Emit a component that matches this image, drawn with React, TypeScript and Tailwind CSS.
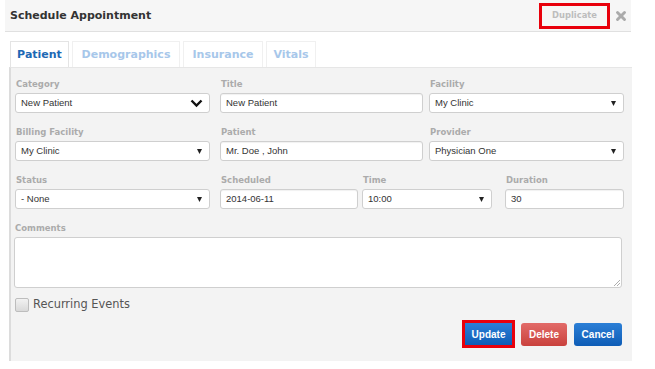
import React from 'react';
import { X } from 'lucide-react';

const sans = { fontFamily: '"DejaVu Sans", Verdana, sans-serif' };

function Label({ children }: { children: React.ReactNode }) {
  return <div className="h-[12px] mb-[3px] text-[8.5px] leading-[12px] font-bold text-[#ababab] pl-[1px]" style={sans}>{children}</div>;
}

function Input({ value }: { value: string }) {
  return (
    <div className="h-[20px] bg-white border border-[#cfcfcf] rounded-[3px] shadow-[inset_0_1px_1px_rgba(0,0,0,0.06)] flex items-center px-[5px] text-[9.5px] text-[#333] font-['Liberation_Sans',Arial,sans-serif]">
      {value}
    </div>
  );
}

function Select({ value, chevron }: { value: string; chevron?: boolean }) {
  return (
    <div className="h-[20px] bg-white border border-[#cfcfcf] rounded-[3px] flex items-center justify-between pl-[5px] pr-[7px] text-[9.5px] text-[#333] font-['Liberation_Sans',Arial,sans-serif]">
      <span>{value}</span>
      {chevron ? (
        <svg width="13" height="9" viewBox="0 0 13 9" className="mr-[-1px]">
          <path d="M1.5 1.5 L6.5 6.5 L11.5 1.5" fill="none" stroke="#111" strokeWidth="2.4" />
        </svg>
      ) : (
        <svg width="5" height="5" viewBox="0 0 6 6">
          <path d="M0 0 L6 0 L3 6 Z" fill="#222" />
        </svg>
      )}
    </div>
  );
}

function Field({ label, w, ml, children }: { label: string; w: string; ml: string; children: React.ReactNode }) {
  return (
    <div className={`${w} ${ml} shrink-0`}>
      <Label>{label}</Label>
      {children}
    </div>
  );
}

export default function App() {
  return (
    <div className="w-[655px] h-[369px] bg-white overflow-hidden relative">
      {/* Header */}
      <div className="ml-[5px] w-[626px] h-[32px] bg-[#f6f6f6] border-b border-[#e0e0e0] flex items-center justify-between pl-[5px]">
        <div className="text-[11px] font-bold text-[#333] mt-[2px]" style={sans}>Schedule Appointment</div>
        <div className="flex items-center">
          <div className="w-[71px] h-[26px] border-[3px] border-[#e8000b] flex items-center justify-center text-[8.4px] font-bold text-[#bdbdbd]" style={sans}>
            Duplicate
          </div>
          <X className="w-[14px] h-[14px] text-[#ababab] ml-[4px] mr-[3px]" strokeWidth={5} />
        </div>
      </div>

      {/* Tabs */}
      <div className="ml-[10px] mt-[9px] flex gap-[3px] h-[26px]" style={sans}>
        <div className="w-[59px] bg-white border border-[#e4e4e4] border-b-0 flex items-center justify-center pt-[1px] text-[11px] font-bold text-[#1d68b4]">Patient</div>
        <div className="w-[108px] bg-white border border-[#f0f0f0] border-b-0 flex items-center justify-center pt-[1px] text-[11px] font-bold text-[#a7c7ea]">Demographics</div>
        <div className="w-[80px] bg-white border border-[#f0f0f0] border-b-0 flex items-center justify-center pt-[1px] text-[11px] font-bold text-[#a7c7ea]">Insurance</div>
        <div className="w-[50px] bg-white border border-[#f0f0f0] border-b-0 flex items-center justify-center pt-[1px] text-[11px] font-bold text-[#a7c7ea]">Vitals</div>
      </div>

      {/* Panel */}
      <div className="ml-[9px] w-[623px] h-[294px] bg-[#f3f3f3] border-l-[2px] border-l-[#dcdcdc] border-t border-t-[#e6e6e6] pl-[4px] pt-[10px]">
        <div className="flex">
          <Field label="Category" w="w-[195px]" ml="ml-0"><Select value="New Patient" chevron /></Field>
          <Field label="Title" w="w-[203px]" ml="ml-[10px]"><Input value="New Patient" /></Field>
          <Field label="Facility" w="w-[195px]" ml="ml-[6px]"><Select value="My Clinic" /></Field>
        </div>
        <div className="flex mt-[13px]">
          <Field label="Billing Facility" w="w-[195px]" ml="ml-0"><Select value="My Clinic" /></Field>
          <Field label="Patient" w="w-[203px]" ml="ml-[10px]"><Input value="Mr. Doe , John" /></Field>
          <Field label="Provider" w="w-[195px]" ml="ml-[6px]"><Select value="Physician One" /></Field>
        </div>
        <div className="flex mt-[13px]">
          <Field label="Status" w="w-[195px]" ml="ml-0"><Select value="- None" /></Field>
          <Field label="Scheduled" w="w-[138px]" ml="ml-[10px]"><Input value="2014-06-11" /></Field>
          <Field label="Time" w="w-[130px]" ml="ml-[4px]"><Select value="10:00" /></Field>
          <Field label="Duration" w="w-[119px]" ml="ml-[13px]"><Input value="30" /></Field>
        </div>
        <div className="mt-[13px] w-[608px] ml-[-1px]">
          <Label>Comments</Label>
          <div className="h-[51px] bg-white border border-[#cfcfcf] rounded-[3px] relative">
            <svg width="6" height="6" viewBox="0 0 6 6" className="absolute right-[1px] bottom-[1px]">
              <path d="M0 6 L6 0 M3 6 L6 3" stroke="#999" strokeWidth="0.8" />
            </svg>
          </div>
        </div>
        <div className="mt-[9px] flex items-center h-[15px]">
          <div className="w-[14px] h-[14px] rounded-[2px] border border-[#bdbdbd] bg-gradient-to-b from-[#f2f2f2] to-[#d9d9d9]" />
          <span className="ml-[4px] text-[11.4px] text-[#555]" style={sans}>Recurring Events</span>
        </div>
        <div className="mt-[8px] flex justify-end pr-[10px] items-center">
          <div className="border-[3px] border-[#e8000b]">
            <div className="w-[47px] h-[22px] bg-gradient-to-b from-[#2b7fd6] to-[#0d5cb6] flex items-center justify-center text-white text-[10px] font-bold font-['Liberation_Sans',Arial,sans-serif]">Update</div>
          </div>
          <div className="ml-[6px] w-[46px] h-[23px] rounded-[3px] bg-gradient-to-b from-[#e26a68] to-[#c9403c] flex items-center justify-center text-white text-[10px] font-bold font-['Liberation_Sans',Arial,sans-serif]">Delete</div>
          <div className="ml-[7px] w-[48px] h-[23px] rounded-[3px] bg-gradient-to-b from-[#2b7fd6] to-[#0d5cb6] flex items-center justify-center text-white text-[10px] font-bold font-['Liberation_Sans',Arial,sans-serif]">Cancel</div>
        </div>
      </div>
    </div>
  );
}
